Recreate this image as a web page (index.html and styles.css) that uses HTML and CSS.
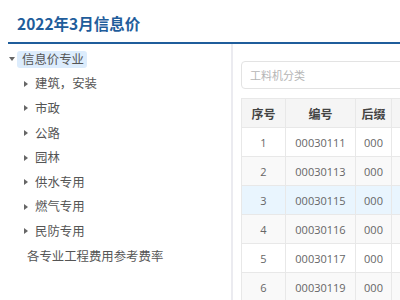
FILE: index.html
```html
<!DOCTYPE html>
<html lang="zh-CN">
<head>
    <meta charset="UTF-8">
    <meta name="viewport" content="width=device-width, initial-scale=1.0">
    <title>2022年3月信息价</title>
    <link rel="stylesheet" href="styles.css">
</head>
<body>
    <div class="page">
        <div class="page-header">
            <h1>2022年3月信息价</h1>
        </div>
        <div class="main">
            <div class="sidebar">
                <ul class="tree">
                    <li class="tree-node root">
                        <span class="caret caret-down"></span>
                        <span class="label selected">信息价专业</span>
                    </li>
                    <li class="tree-node child"><span class="caret"></span><span class="label">建筑，安装</span></li>
                    <li class="tree-node child"><span class="caret"></span><span class="label">市政</span></li>
                    <li class="tree-node child"><span class="caret"></span><span class="label">公路</span></li>
                    <li class="tree-node child"><span class="caret"></span><span class="label">园林</span></li>
                    <li class="tree-node child"><span class="caret"></span><span class="label">供水专用</span></li>
                    <li class="tree-node child"><span class="caret"></span><span class="label">燃气专用</span></li>
                    <li class="tree-node child"><span class="caret"></span><span class="label">民防专用</span></li>
                    <li class="tree-node leaf"><span class="label">各专业工程费用参考费率</span></li>
                </ul>
            </div>
            <div class="content">
                <input type="text" class="search-input" placeholder="工料机分类">
                <table class="price-table">
                    <thead>
                        <tr>
                            <th class="col-no">序号</th>
                            <th class="col-code">编号</th>
                            <th class="col-suffix">后缀</th>
                            <th></th>
                        </tr>
                    </thead>
                    <tbody>
                        <tr><td>1</td><td>00030111</td><td>000</td><td></td></tr>
                        <tr><td>2</td><td>00030113</td><td>000</td><td></td></tr>
                        <tr class="hover"><td>3</td><td>00030115</td><td>000</td><td></td></tr>
                        <tr><td>4</td><td>00030116</td><td>000</td><td></td></tr>
                        <tr><td>5</td><td>00030117</td><td>000</td><td></td></tr>
                        <tr><td>6</td><td>00030119</td><td>000</td><td></td></tr>
                    </tbody>
                </table>
            </div>
        </div>
    </div>
</body>
</html>
```

FILE: styles.css
```css
body {
    font-family: "Open Sans", "Noto Sans CJK SC", sans-serif;
    margin: 0;
    padding: 0;
    background-color: #fff;
    color: #606266;
    overflow: hidden;
}
.page {
    margin-left: 8px;
}
.page-header {
    border-bottom: 2px solid #1f5d9b;
    box-sizing: border-box;
    height: 44px;
}
.page-header h1 {
    margin: 0;
    padding: 12px 0 0 9px;
    font-family: "Noto Sans CJK SC", sans-serif;
    font-size: 15.5px;
    line-height: 22px;
    font-weight: bold;
    color: #1f5d9b;
}
.main {
    display: flex;
    height: 256px;
}
.sidebar {
    width: 223px;
    border-right: 2px solid #ebebf0;
    flex-shrink: 0;
}
.tree {
    list-style: none;
    margin: 0;
    padding: 3px 0 0 0;
}
.tree-node {
    display: flex;
    align-items: center;
    height: 24.6px;
    font-family: "Noto Sans CJK SC", sans-serif;
    font-size: 12.4px;
    color: #555;
}
.tree-node.root {
    padding-left: 1px;
}
.tree-node.child {
    padding-left: 16px;
}
.tree-node.leaf {
    padding-left: 19px;
}
.caret {
    width: 0;
    height: 0;
    border-left: 4px solid #666;
    border-top: 3.5px solid transparent;
    border-bottom: 3.5px solid transparent;
    margin-right: 7px;
}
.caret-down {
    border-left: 3px solid transparent;
    border-right: 3px solid transparent;
    border-top: 4px solid #666;
    border-bottom: none;
    margin-right: 2px;
}
.label {
    line-height: 17px;
}
.label.selected {
    background-color: #dcecfc;
    border-radius: 3px;
    padding: 0 3px 0 5px;
}
.content {
    flex: 1;
    padding: 17px 0 0 8px;
    overflow: hidden;
}
.search-input {
    display: block;
    width: 200px;
    height: 28px;
    box-sizing: border-box;
    border: 1px solid #e3e3e3;
    border-radius: 4px;
    padding: 0 8px;
    font-family: "Noto Sans CJK SC", sans-serif;
    font-size: 11px;
    color: #606266;
    outline: none;
}
.search-input::placeholder {
    color: #b5b5b5;
}
.price-table {
    margin-top: 9px;
    border-collapse: collapse;
    width: 200px;
    font-size: 11px;
    color: #666;
    table-layout: fixed;
}
.price-table th,
.price-table td {
    border: 1px solid #e8e8e8;
    text-align: center;
    height: 28px;
    padding: 0;
}
.price-table thead th {
    background-color: #f5f5f5;
    font-family: "Noto Sans CJK SC", sans-serif;
    font-size: 12px;
    color: #444;
    height: 28px;
}
.col-no {
    width: 43px;
}
.col-code {
    width: 69px;
}
.col-suffix {
    width: 35px;
}
.price-table tbody tr:nth-child(even) td {
    background-color: #f9f9f9;
}
.price-table tbody tr.hover td {
    background-color: #e9f5fe;
}
```
